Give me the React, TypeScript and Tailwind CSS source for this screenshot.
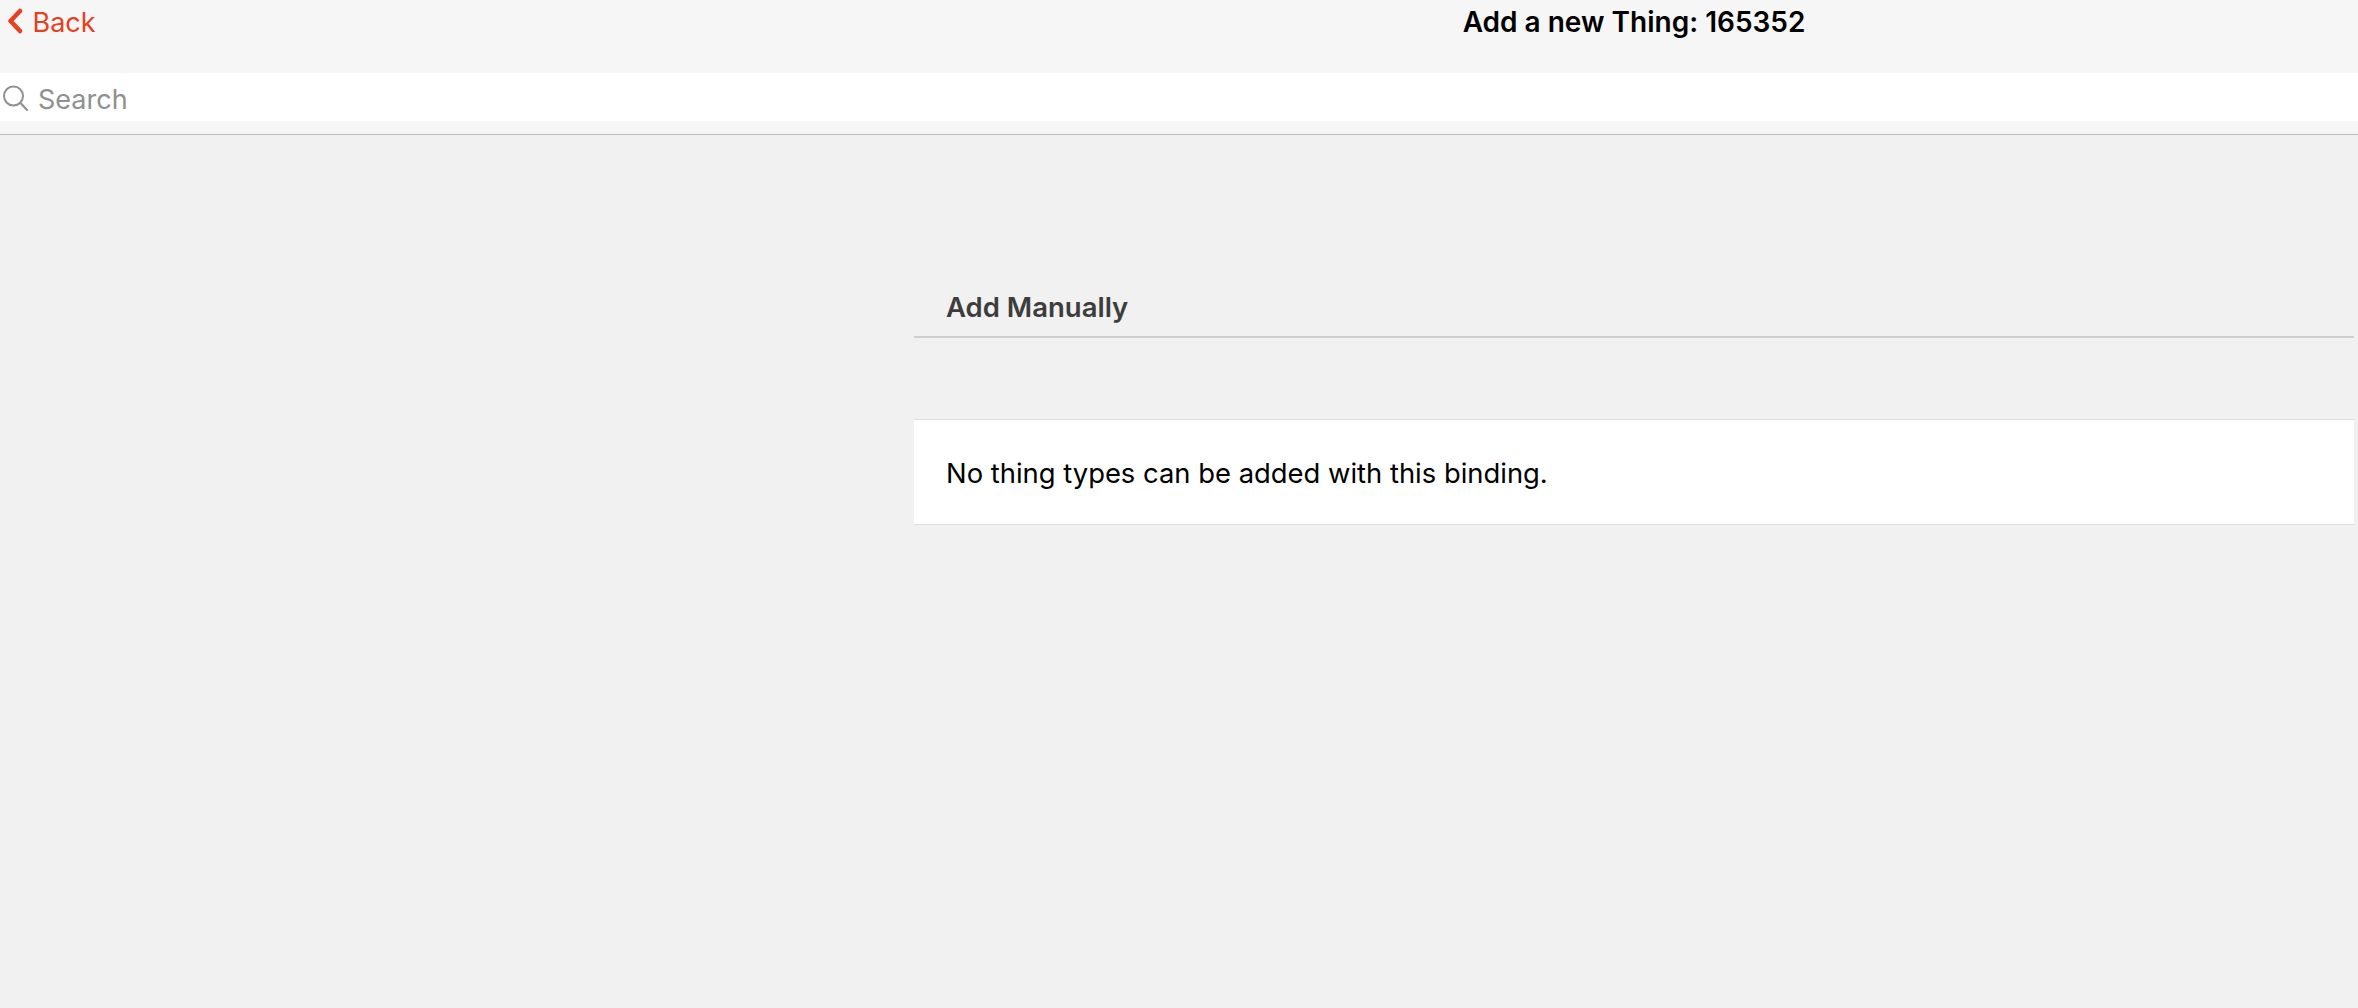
import React from "react";

const App = () => {
  return (
    <div className="min-h-[1008px] bg-[#f1f1f1] font-['Inter',sans-serif] overflow-hidden">
      <header className="bg-[#f6f6f6] border-b border-[#bdbdbd] h-[135px]">
        <div className="flex h-[73px]">
          <a className="w-[914px] flex items-start pl-[7px] pt-[6px] text-[#e5401f] text-[27px] leading-[33px]">
            <svg width="16" height="26" viewBox="0 0 16 26" className="mt-[2px] mr-[9.5px]" fill="none">
              <path d="M13 3 L3.5 13 L13 23" stroke="#e5401f" strokeWidth="4.5" strokeLinecap="round" strokeLinejoin="round" />
            </svg>
            Back
          </a>
          <h1 className="w-[1440px] text-center text-black text-[28px] leading-[33px] font-semibold pt-[6px]">
            Add a new Thing: 165352
          </h1>
        </div>
        <div className="flex items-center h-[48px] bg-white pl-[2px] pt-[1px]">
          <svg width="26" height="28" viewBox="0 0 26 28" fill="none" className="mr-[10px]">
            <circle cx="11.5" cy="12" r="9.5" stroke="#909090" strokeWidth="2" />
            <path d="M18.5 19 L25 26" stroke="#909090" strokeWidth="2" strokeLinecap="round" />
          </svg>
          <span className="text-[#909090] text-[27px] leading-[33px] pt-[3px]">Search</span>
        </div>
      </header>
      <main className="flex justify-end pr-[4px] pt-[152px]">
        <section className="w-[1440px]">
          <h2 className="pl-[32px] pt-[4px] border-b-2 border-[#cfcfcf] text-[#3d3d3d] text-[27.5px] leading-[33px] font-semibold h-[51px]">
            Add Manually
          </h2>
          <div className="mt-[81px] h-[106px] flex items-center pl-[32px] pt-[2px] bg-white border-y border-[#dedede] text-black text-[27.4px] leading-[33px]">
            No thing types can be added with this binding.
          </div>
        </section>
      </main>
    </div>
  );
};

export default App;
